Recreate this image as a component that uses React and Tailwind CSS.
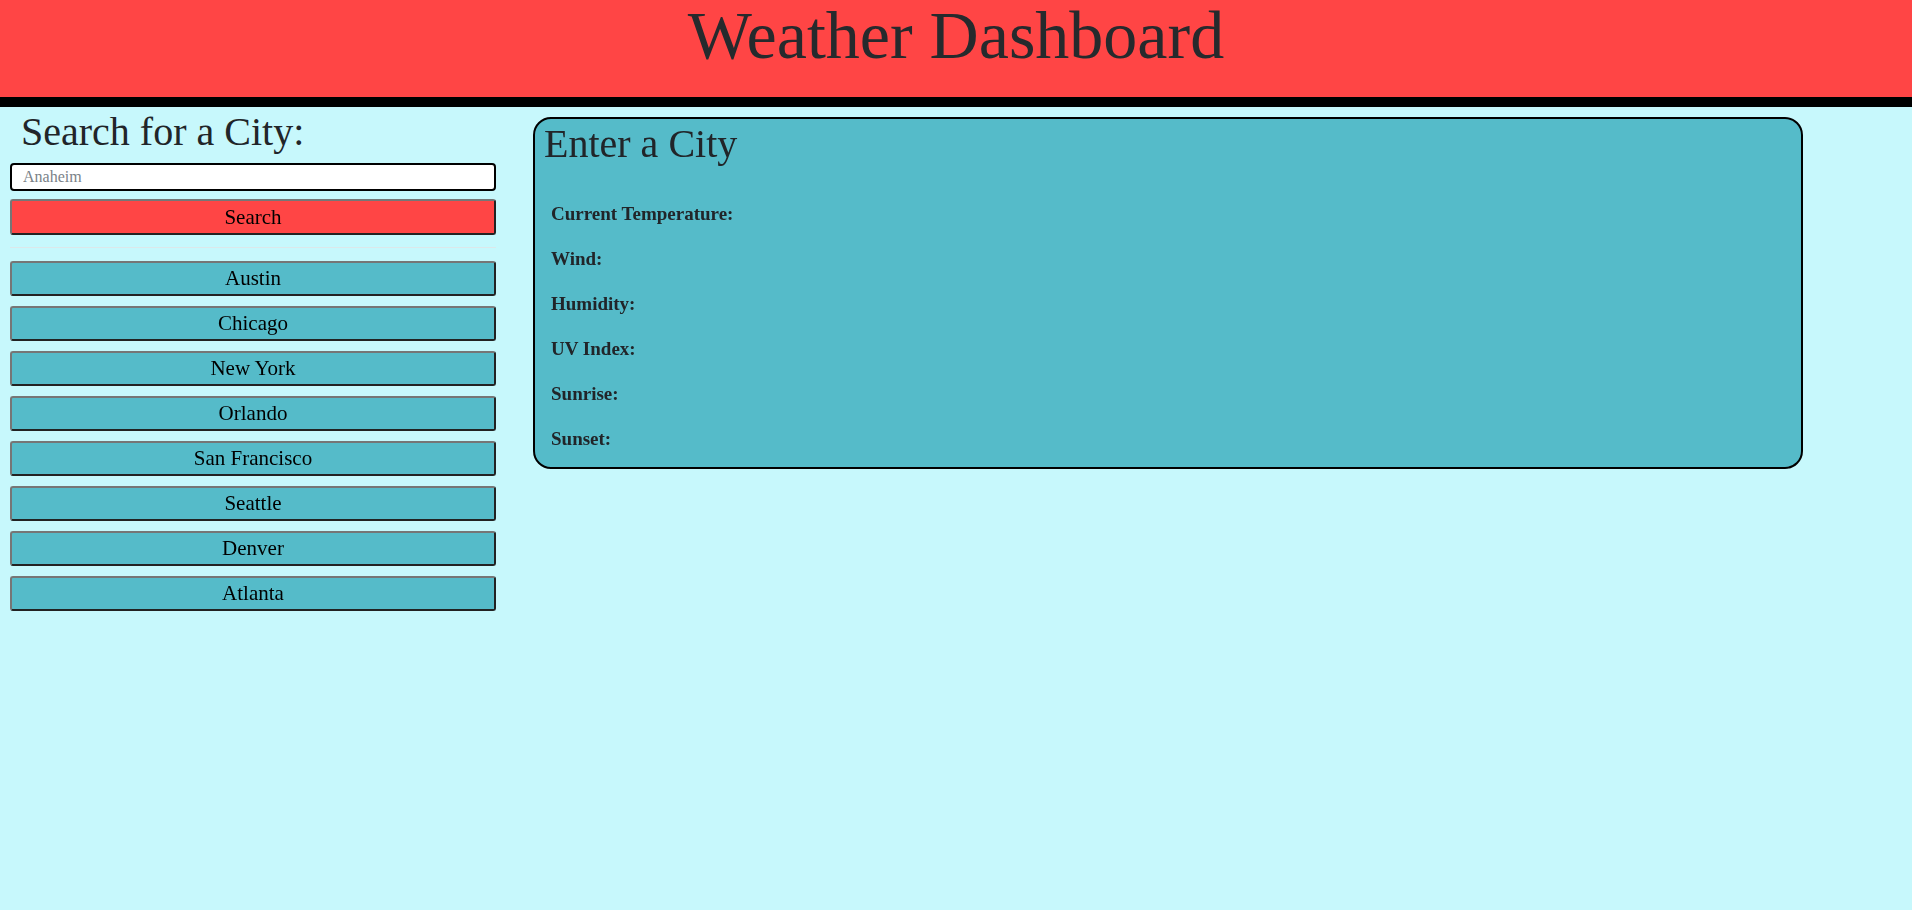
const CIDADES = ['Austin', 'Chicago', 'New York', 'Orlando', 'San Francisco', 'Seattle', 'Denver', 'Atlanta'];

const CAMPOS = ['Current Temperature:', 'Wind:', 'Humidity:', 'UV Index:', 'Sunrise:', 'Sunset:'];

export default function App() {
  return (
    <div className="min-h-[910px] bg-[#c7f8fc] text-[#212529] font-['Liberation_Serif',serif]">
      {/* Cabeçalho */}
      <header className="h-[107px] bg-[#ff4545] border-b-[10px] border-black">
        <h1 className="pt-px text-center text-[68px] leading-none text-[#262a2d]">Weather Dashboard</h1>
      </header>

      <main className="flex items-start px-[10px]">
        {/* Coluna de pesquisa */}
        <aside className="w-[486px] shrink-0">
          <h2 className="mt-[5px] pl-[11px] text-[40px] leading-none text-[#212529]">Search for a City:</h2>
          <input
            type="text"
            autoFocus
            placeholder="Anaheim"
            className="mt-[11px] block w-full h-[28px] rounded-[4px] border-2 border-black bg-white px-[11px] text-[16px] text-black placeholder:text-[#7a8288] outline-none"
          />
          <button
            type="button"
            className="mt-[8px] block w-full h-[36px] rounded-[3px] border-2 border-t-[#767676] border-l-[#767676] border-b-[#222] border-r-[#222] bg-[#ff4545] text-[21px] leading-none text-black"
          >
            Search
          </button>
          <hr className="mt-[12px] border-0 border-t border-[#dce8ea]" />
          <div className="mt-[13px] flex flex-col gap-[10px]">
            {CIDADES.map((c) => (
              <button
                key={c}
                type="button"
                className="block w-full h-[35px] rounded-[3px] border-2 border-t-[#767676] border-l-[#767676] border-b-[#222] border-r-[#222] bg-[#55bbc9] text-[21px] leading-none text-black"
              >
                {c}
              </button>
            ))}
          </div>
        </aside>

        {/* Cartão do tempo atual */}
        <section className="ml-[37px] mt-[10px] w-[1270px] h-[352px] rounded-[18px] border-2 border-black bg-[#55bbc9] pl-[9px] pt-[5px]">
          <h2 className="text-[40px] leading-none text-[#212529]">Enter a City</h2>
          <div className="mt-[40px] pl-[7px] flex flex-col gap-[26px]">
            {CAMPOS.map((c) => (
              <p key={c} className="text-[19px] leading-none font-bold text-[#212529]">{c}</p>
            ))}
          </div>
        </section>
      </main>
    </div>
  );
}
